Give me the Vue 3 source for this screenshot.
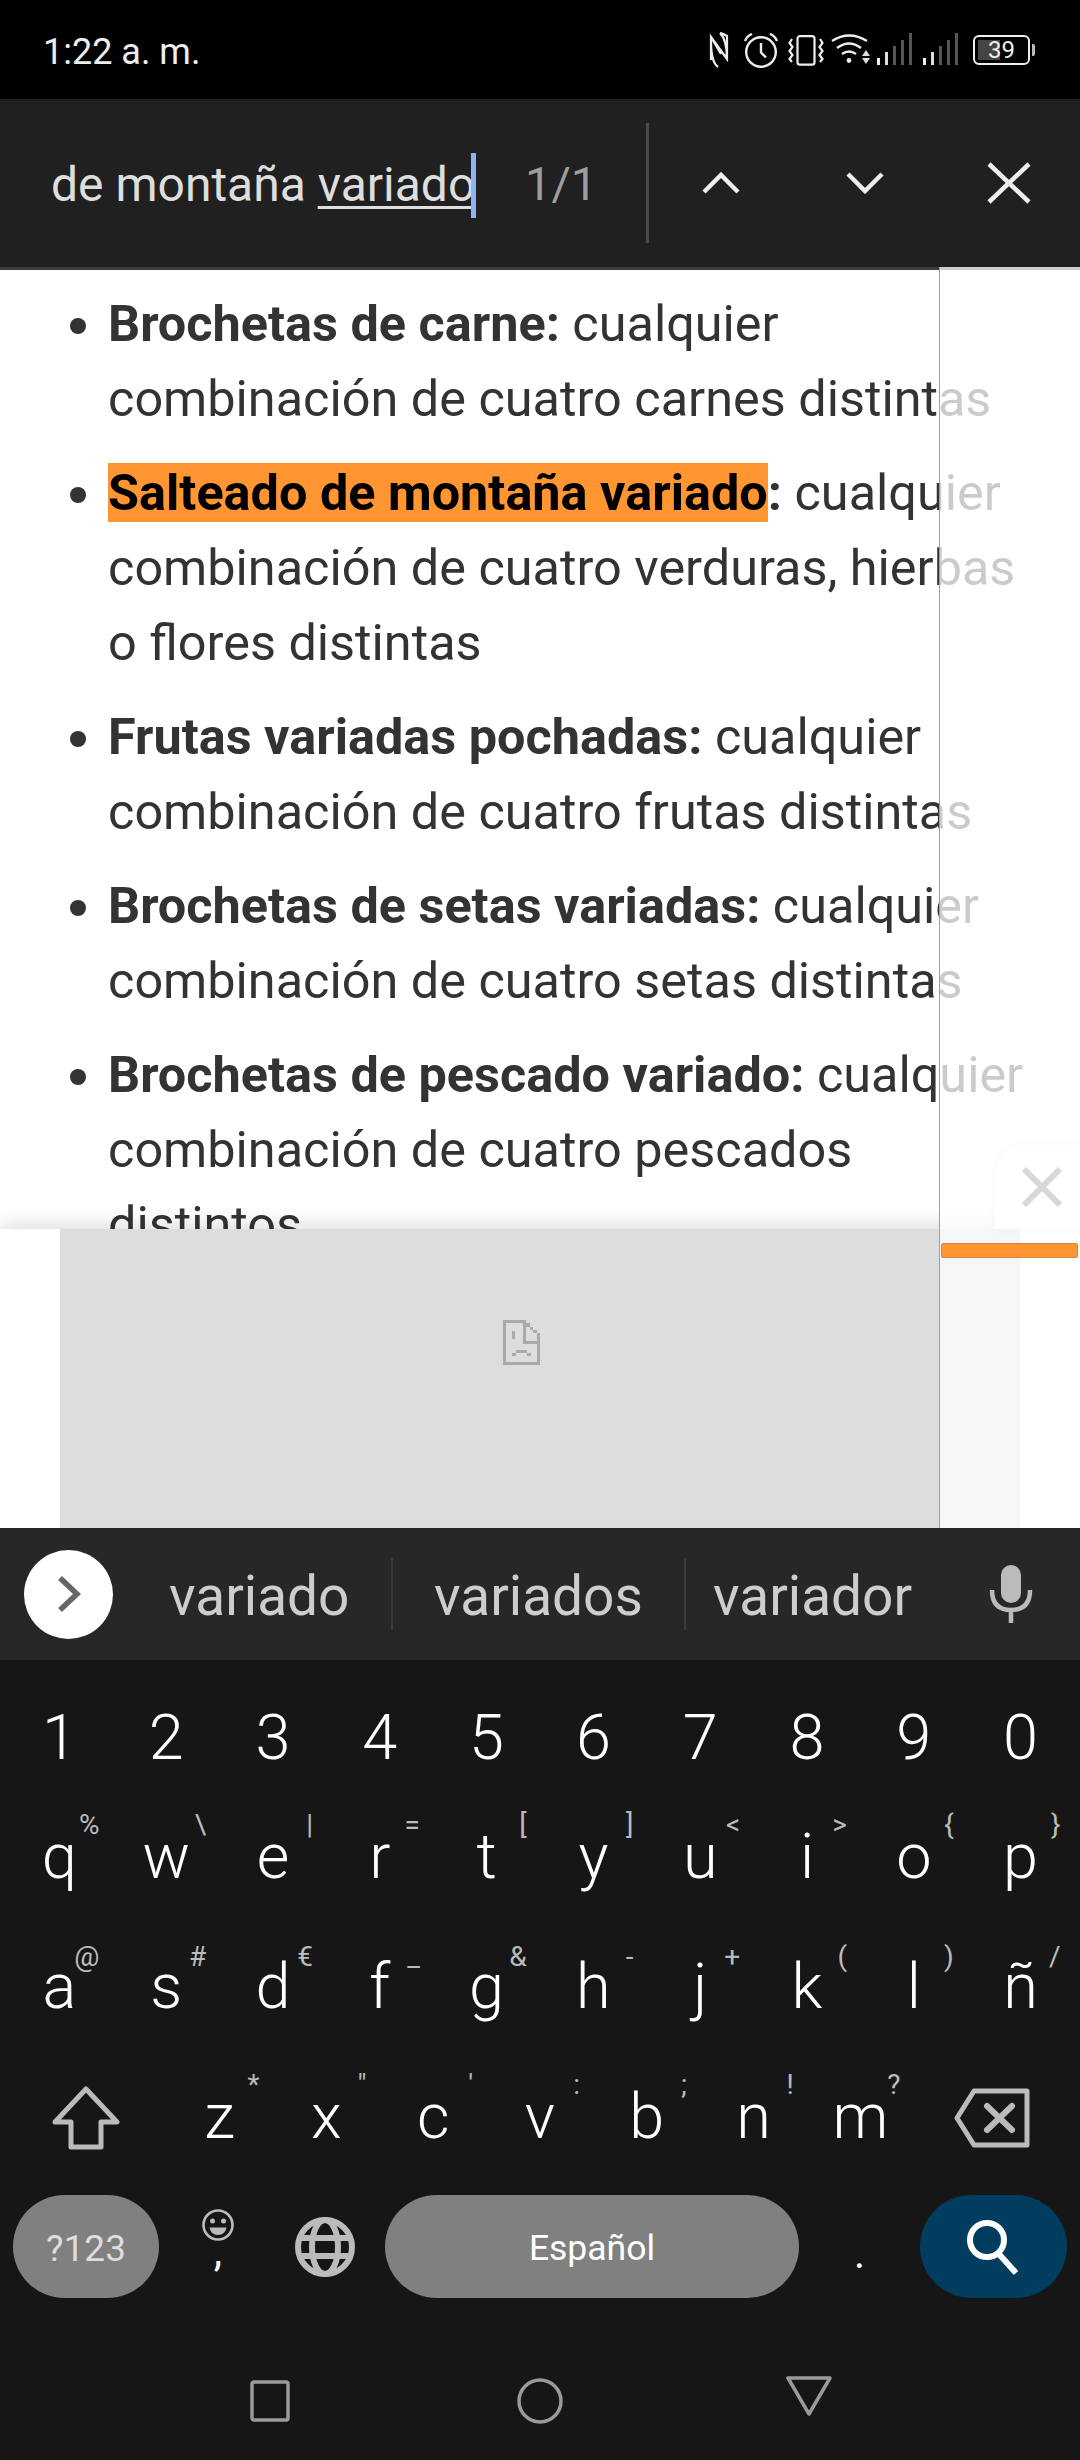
<template>
  <div class="phone">
    <div class="status-bar">
      <span class="clock">1:22 a. m.</span>
      <div class="status-icons">
        <svg class="ic-nfc" width="20" height="36" viewBox="0 0 20 36" fill="none" stroke="#eee" stroke-width="2.2">
          <path d="M2 28V5L18 27V4Q14 1.5 11 1M2 9Q2 30 9 35M18 27Q18 8 11 1M2 5L12 22" />
        </svg>
        <svg class="ic-alarm" width="36" height="35" viewBox="0 0 36 35" fill="none" stroke="#eee" stroke-width="2.4">
          <circle cx="18" cy="19" r="14.8" />
          <path d="M18 10v9.5l5 5M2 8Q4 3 9 1M34 8Q32 3 27 1" />
        </svg>
        <svg class="ic-vibrate" width="36" height="31" viewBox="0 0 36 31" fill="none" stroke="#eee" stroke-width="2.2">
          <rect x="9.5" y="1.2" width="17" height="28.5" rx="2.5" />
          <path d="M4 4L1.5 8L4.5 12L1.5 16L4.5 20L1.5 24L4 27M32 4L34.5 8L31.5 12L34.5 16L31.5 20L34.5 24L32 27" />
        </svg>
        <svg class="ic-wifi" width="40" height="32" viewBox="0 0 40 32" fill="none">
          <g stroke="#eee" stroke-width="2.4">
            <path d="M1 8Q18 -3 36 8M6 15Q18 6 30 15M11 21Q18 16 25 21" />
          </g>
          <circle cx="18" cy="27.5" r="2.4" fill="#eee" />
          <path d="M35 17l4 6h-8zM31 25h8l-4 6z" fill="#ddd" />
        </svg>
        <svg v-for="n in 2" :key="n" class="ic-signal" width="35" height="32" viewBox="0 0 35 32">
          <rect x="0" y="25" width="3" height="7" fill="#eee" />
          <rect x="8" y="19" width="3" height="13" fill="#ddd" />
          <rect x="16" y="13" width="3" height="19" fill="#555" />
          <rect x="24" y="7" width="3" height="25" fill="#555" />
          <rect x="32" y="0" width="3" height="32" fill="#555" />
        </svg>
        <div class="battery">
          <div class="batt-fill"></div>
          <span class="batt-num">39</span>
        </div>
      </div>
    </div>

    <div class="find-bar">
      <div class="find-text">de montaña <span class="composing">variado</span><span class="caret"></span></div>
      <span class="find-count">1/1</span>
      <div class="find-divider"></div>
      <svg class="find-btn" width="38" height="22" viewBox="0 0 38 22" fill="none" stroke="#eee" stroke-width="4.5">
        <path d="M2 20L19 3L36 20" />
      </svg>
      <svg class="find-btn" width="38" height="22" viewBox="0 0 38 22" fill="none" stroke="#eee" stroke-width="4.5">
        <path d="M2 2L19 19L36 2" />
      </svg>
      <svg class="find-close" width="44" height="42" viewBox="0 0 44 42" fill="none" stroke="#eee" stroke-width="4.5">
        <path d="M2 2L42 40M42 2L2 40" />
      </svg>
    </div>

    <div class="page">
      <div class="article">
        <ul>
          <li v-for="item in items" :key="item.title">
            <mark v-if="item.hit"><b>{{ item.title }}</b></mark>
            <b v-else>{{ item.title }}</b><b>:</b> {{ item.text }}
          </li>
        </ul>
      </div>
      <div class="ad">
        <div class="ad-close">
          <svg width="40" height="40" viewBox="0 0 40 40" fill="none" stroke="#666" stroke-width="6">
            <path d="M2 2L38 38M38 2L2 38" />
          </svg>
        </div>
        <div class="ad-slot">
          <svg class="sad-file" width="37" height="45" viewBox="0 0 37 45" shape-rendering="crispEdges" fill="#aaa">
            <path d="M0 0H23V3H0zM0 3H3V45H0zM34 13H37V45H34zM3 42H34V45H3z" />
            <path d="M20 3H23V21H34V24H20zM23 3H27V7H23zM27 7H30V10H27zM30 10H34V13H30z" />
            <rect x="9" y="11" width="3" height="8" />
            <path d="M13 30H24V33H13zM9 33H13V36H9zM24 33H28V36H24z" />
          </svg>
        </div>
      </div>
      <div class="results-strip">
        <div class="tick"></div>
      </div>
    </div>

    <div class="suggestions">
      <div class="sugg-toggle">
        <svg width="24" height="36" viewBox="0 0 24 36" fill="none" stroke="#666" stroke-width="5.5">
          <path d="M3 2L20 18L3 34" />
        </svg>
      </div>
      <span class="sugg s1">variado</span>
      <span class="sugg-sep"></span>
      <span class="sugg s2">variados</span>
      <span class="sugg-sep"></span>
      <span class="sugg s3">variador</span>
      <svg class="mic" width="44" height="58" viewBox="0 0 44 58" fill="none">
        <rect x="12" y="0" width="20" height="38" rx="10" fill="#bbb" />
        <path d="M3 25Q3 45 22 45Q41 45 41 25M22 45V58" stroke="#bbb" stroke-width="4.5" />
      </svg>
    </div>

    <div class="keyboard">
      <div class="row row-num">
        <div v-for="d in digits" :key="d" class="key">{{ d }}</div>
      </div>
      <div class="row row-q">
        <div v-for="k in rowQ" :key="k[0]" class="key">
          {{ k[0] }}<span class="hint">{{ k[1] }}</span>
        </div>
      </div>
      <div class="row row-a">
        <div v-for="k in rowA" :key="k[0]" class="key">
          {{ k[0] }}<span class="hint">{{ k[1] }}</span>
        </div>
      </div>
      <div class="row row-z">
        <div class="key icon-key">
          <svg width="68" height="64" viewBox="0 0 68 64" fill="none" stroke="#bbb" stroke-width="5" stroke-linejoin="round">
            <path d="M34 3L65 36H49V61H19V36H3z" />
          </svg>
        </div>
        <div v-for="k in rowZ" :key="k[0]" class="key">
          {{ k[0] }}<span class="hint">{{ k[1] }}</span>
        </div>
        <div class="key icon-key">
          <svg class="backspace" width="76" height="60" viewBox="0 0 76 60" fill="none" stroke="#bbb" stroke-width="5" stroke-linejoin="round">
            <path d="M20 3H73V57H20L3 30z" />
            <path d="M33 18L58 42M58 18L33 42" stroke-linecap="round" stroke-width="6" />
          </svg>
        </div>
      </div>
      <div class="row row-bottom">
        <div class="pill sym">?123</div>
        <div class="emoji-key">
          <svg width="32" height="32" viewBox="0 0 32 32" fill="none">
            <circle cx="16" cy="16" r="14.5" stroke="#bbb" stroke-width="2.6" />
            <circle cx="10.5" cy="12" r="2.5" fill="#bbb" />
            <circle cx="21.5" cy="12" r="2.5" fill="#bbb" />
            <path d="M7.5 18.5H24.5Q23 26 16 26Q9 26 7.5 18.5z" fill="#bbb" />
          </svg>
          <span class="comma">,</span>
        </div>
        <div class="globe-key">
          <svg width="60" height="60" viewBox="0 0 60 60" fill="none" stroke="#bbb" stroke-width="6">
            <circle cx="30" cy="30" r="27" />
            <ellipse cx="30" cy="30" rx="13" ry="27" />
            <path d="M5 21H55M5 39H55" />
          </svg>
        </div>
        <div class="pill space">Español</div>
        <div class="period">.</div>
        <div class="pill search">
          <svg width="56" height="56" viewBox="0 0 56 56" fill="none" stroke="#fff" stroke-width="6">
            <circle cx="21" cy="21" r="17" />
            <path d="M32 34L50 54" />
          </svg>
        </div>
      </div>
      <div class="nav-bar">
        <svg width="40" height="42" viewBox="0 0 40 42" fill="none" stroke="#9a9a9a" stroke-width="3.5">
          <rect x="2" y="2" width="36" height="38" rx="2" />
        </svg>
        <svg class="nav-home" width="46" height="46" viewBox="0 0 46 46" fill="none" stroke="#9a9a9a" stroke-width="3.5">
          <circle cx="23" cy="23" r="21" />
        </svg>
        <svg class="nav-back" width="46" height="40" viewBox="0 0 46 40" fill="none" stroke="#9a9a9a" stroke-width="3.5" stroke-linejoin="round">
          <path d="M2 2H44L23 38z" />
        </svg>
      </div>
    </div>
  </div>
</template>

<script setup>
const items = [
  { title: 'Brochetas de carne', text: 'cualquier combinación de cuatro carnes distintas' },
  { title: 'Salteado de montaña variado', text: 'cualquier combinación de cuatro verduras, hierbas o flores distintas', hit: true },
  { title: 'Frutas variadas pochadas', text: 'cualquier combinación de cuatro frutas distintas' },
  { title: 'Brochetas de setas variadas', text: 'cualquier combinación de cuatro setas distintas' },
  { title: 'Brochetas de pescado variado', text: 'cualquier combinación de cuatro pescados distintos' }
]

const digits = ['1', '2', '3', '4', '5', '6', '7', '8', '9', '0']

const rowQ = [
  ['q', '%'], ['w', '\\'], ['e', '|'], ['r', '='], ['t', '['],
  ['y', ']'], ['u', '<'], ['i', '>'], ['o', '{'], ['p', '}']
]

const rowA = [
  ['a', '@'], ['s', '#'], ['d', '€'], ['f', '_'], ['g', '&'],
  ['h', '-'], ['j', '+'], ['k', '('], ['l', ')'], ['ñ', '/']
]

const rowZ = [
  ['z', '*'], ['x', '"'], ['c', "'"], ['v', ':'], ['b', ';'], ['n', '!'], ['m', '?']
]
</script>

<style>
html,
body {
  margin: 0;
  background: #161616;
}
</style>

<style scoped>
.phone {
  width: 1080px;
  height: 2460px;
  display: flex;
  flex-direction: column;
  overflow: hidden;
  font-family: Roboto, "Liberation Sans", sans-serif;
}

.status-bar {
  height: 99px;
  flex: none;
  background: #000;
  display: flex;
  align-items: center;
  justify-content: space-between;
  padding: 0 47px 0 43px;
  box-sizing: border-box;
}

.clock {
  color: #eee;
  font-size: 36px;
  position: relative;
  top: 2px;
}

.status-icons {
  display: flex;
  align-items: flex-end;
  height: 36px;
  position: relative;
  top: 0;
}

.ic-alarm {
  margin-left: 14px;
}

.ic-vibrate {
  margin-left: 9px;
  margin-bottom: 2px;
}

.ic-wifi {
  margin-left: 7px;
  margin-bottom: 3px;
}

.ic-signal {
  margin-left: 6px;
  margin-bottom: 3px;
}

.ic-signal + .ic-signal {
  margin-left: 11px;
}

.battery {
  margin-left: 15px;
  margin-right: 3px;
  margin-bottom: 3px;
  width: 57px;
  height: 30px;
  border: 2.5px solid #eee;
  border-radius: 6px;
  box-sizing: border-box;
  position: relative;
  display: flex;
  align-items: center;
  justify-content: center;
}

.battery::after {
  content: '';
  position: absolute;
  right: -7px;
  top: 7px;
  width: 3px;
  height: 12px;
  background: #bbb;
  border-radius: 0 2px 2px 0;
}

.batt-fill {
  position: absolute;
  left: 3px;
  top: 3px;
  bottom: 3px;
  width: 22px;
  background: #444;
}

.batt-num {
  position: relative;
  color: #eee;
  font-size: 24px;
  line-height: 1;
}

.find-bar {
  height: 168px;
  flex: none;
  background: #202020;
  display: flex;
  align-items: center;
  box-sizing: border-box;
  padding-left: 51px;
}

.find-text {
  color: #dedede;
  font-size: 48px;
  width: 424px;
  white-space: nowrap;
  position: relative;
  top: 2px;
}

.composing {
  text-decoration: underline;
  text-decoration-thickness: 3px;
  text-underline-offset: 5px;
}

.caret {
  display: inline-block;
  width: 5px;
  height: 65px;
  background: #8ab4f8;
  vertical-align: -17px;
  margin-left: -4px;
}

.find-count {
  color: #9e9e9e;
  font-size: 47px;
  margin-left: 50px;
  width: 70px;
}

.find-divider {
  width: 3px;
  height: 120px;
  background: #4a4a4a;
  margin-left: 51px;
}

.find-btn {
  margin-left: 53px;
}

.find-btn + .find-btn {
  margin-left: 106px;
}

.find-close {
  margin-left: 103px;
}

.page {
  flex: 1;
  min-height: 0;
  position: relative;
  background: #fff;
  border-top: 3px solid #3c3c3c;
  display: flex;
  flex-direction: column;
}

.article {
  flex: 1;
  min-height: 0;
  overflow: hidden;
  color: #333;
  font-size: 50.4px;
  line-height: 75px;
}

.article ul {
  margin: 0;
  padding: 16px 50px 0 108px;
  list-style: disc;
}

.article li {
  margin-bottom: 19px;
}

.article mark {
  background: #ff9632;
  color: #000;
}

.ad {
  height: 299px;
  flex: none;
  background: #fff;
  padding: 0 60px;
  position: relative;
  box-shadow: 0 -6px 18px rgba(0, 0, 0, 0.12);
}

.ad-slot {
  height: 100%;
  background: #ddd;
  display: flex;
  justify-content: center;
  padding-top: 91px;
  box-sizing: border-box;
}

.ad-close {
  position: absolute;
  right: 0;
  bottom: 100%;
  width: 85px;
  height: 84px;
  padding-left: 9px;
  background: #fff;
  border-top-left-radius: 30px;
  box-shadow: 0 0 8px rgba(0, 0, 0, 0.1);
  display: flex;
  align-items: center;
  justify-content: center;
  box-sizing: border-box;
}

.sad-file {
  display: block;
  margin-right: 37px;
}

/* find-in-page results strip, washes out what is under it */
.results-strip {
  position: absolute;
  left: 939px;
  right: 0;
  top: -3px;
  bottom: 0;
  background: rgba(255, 255, 255, 0.75);
  border-left: 1px solid #a0a0a0;
  box-sizing: border-box;
}

.tick {
  position: absolute;
  left: 1px;
  top: 976px;
  width: 137px;
  height: 15px;
  background: #ff9632;
  border: 1px solid #d9863a;
  border-radius: 2px;
  box-sizing: border-box;
}

.suggestions {
  height: 132px;
  flex: none;
  background: #272727;
  position: relative;
  display: flex;
  align-items: center;
  color: #cdcdcd;
  font-size: 55px;
}

.sugg-toggle {
  width: 89px;
  height: 89px;
  margin-left: 24px;
  border-radius: 50%;
  background: #fff;
  display: flex;
  align-items: center;
  justify-content: center;
}

.sugg {
  white-space: nowrap;
  position: relative;
  top: 2px;
}

.s1 {
  margin-left: 56px;
  width: 222px;
}

.s2 {
  margin-left: 41px;
  width: 250px;
}

.s3 {
  margin-left: 27px;
  width: 250px;
}

.sugg-sep {
  width: 2px;
  height: 72px;
  background: #3a3a3a;
}

.mic {
  margin-left: 26px;
}

.keyboard {
  flex: none;
  height: 800px;
  background: #161616;
  padding-top: 46px;
  box-sizing: border-box;
  color: #fff;
  font-size: 63px;
  font-weight: 350;
  line-height: 63px;
}

.row {
  display: grid;
  grid-template-columns: repeat(10, 1fr);
  padding: 0 6px;
  text-align: center;
}

.row-num {
  height: 119px;
}

.row-q,
.row-a {
  height: 130px;
}

.row-z {
  height: 110px;
  grid-template-columns: 1.5fr repeat(7, 1fr) 1.5fr;
}

.key {
  position: relative;
  height: 63px;
}

.icon-key {
  display: flex;
  justify-content: center;
}

.icon-key svg {
  margin-top: 1px;
}

.icon-key .backspace {
  margin-top: 3px;
  margin-right: 4px;
}

.hint {
  position: absolute;
  right: calc(50% - 40px);
  top: -14px;
  color: #bbb;
  font-size: 28px;
  font-weight: 400;
  line-height: 28px;
}

.row-a .hint {
  top: -12px;
}

.row-bottom {
  display: flex;
  padding: 0 13px;
  height: 103px;
  align-items: center;
}

.pill {
  height: 103px;
  border-radius: 52px;
  display: flex;
  align-items: center;
  justify-content: center;
  flex: none;
  box-sizing: border-box;
  font-weight: 400;
}

.sym {
  width: 146px;
  padding-top: 4px;
  background: #808080;
  color: #ddd;
  font-size: 37px;
}

.emoji-key {
  width: 118px;
  height: 103px;
  flex: none;
  display: flex;
  flex-direction: column;
  align-items: center;
  padding-top: 14px;
  box-sizing: border-box;
}

.emoji-key svg {
  display: block;
  flex: none;
}

.comma {
  font-size: 42px;
  font-weight: 400;
  line-height: 30px;
  margin-top: -4px;
}

.globe-key {
  width: 96px;
  flex: none;
  display: flex;
  justify-content: center;
}

.space {
  width: 414px;
  margin-left: 12px;
  padding-top: 4px;
  background: #808080;
  color: #fff;
  font-size: 35.5px;
}

.period {
  width: 121px;
  flex: none;
  text-align: center;
  font-size: 42px;
  font-weight: 400;
  line-height: 42px;
  padding-top: 14px;
}

.search {
  width: 147px;
  background: #003d5e;
}

.nav-bar {
  display: flex;
  align-items: center;
  justify-content: space-between;
  box-sizing: border-box;
  padding: 80px 248px 0 250px;
}

.nav-home {
  margin-left: 4px;
}

.nav-back {
  margin-top: -10px;
}
</style>
